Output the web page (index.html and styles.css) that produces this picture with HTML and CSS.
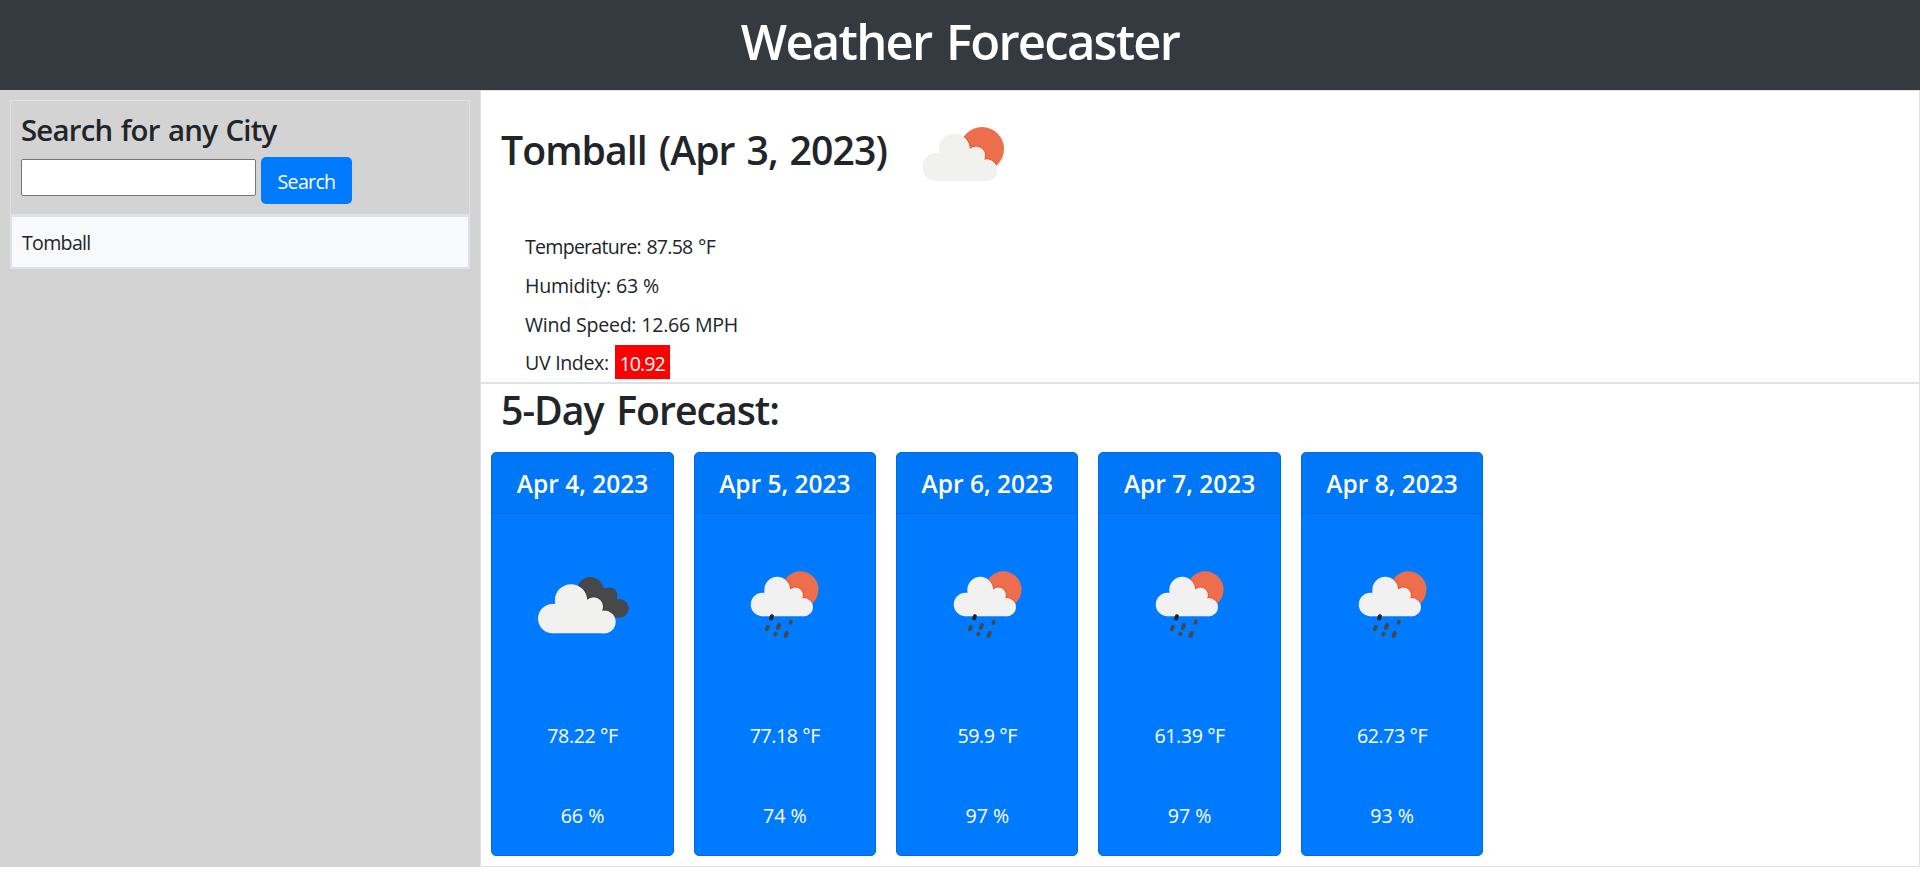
FILE: index.html
```html
<!DOCTYPE html>
<html lang="en">
<head>
<meta charset="utf-8">
<title>Weather Forecaster</title>
<link rel="stylesheet" href="styles.css">
</head>
<body>
<svg class="sprite" aria-hidden="true">
  <defs>
    <g id="cloud">
      <circle cx="14.500" cy="40" r="14.200"/>
      <circle cx="32.200" cy="22.300" r="15.600"/>
      <circle cx="54" cy="28.600" r="9.200"/>
      <circle cx="64.300" cy="43.200" r="11"/>
      <path d="M14.500 54.200V26L48 22L60 34L64.300 54.200Z"/>
    </g>
    <clipPath id="sun-clip"><circle cx="60" cy="22" r="22"/></clipPath>
    <g id="sun-cloud">
      <circle cx="60" cy="22" r="22" fill="#ec6e4c"/>
      <g clip-path="url(#sun-clip)"><use href="#cloud" fill="#e8562f" stroke="#e8562f" stroke-width="2"/></g>
      <use href="#cloud"/>
    </g>
    <g id="drops" stroke="#484849" stroke-width="3.900" stroke-linecap="round">
      <path d="M20.600 47.200l.8-2.300" stroke="#222"/>
      <path d="M16.300 58l1-2.400M27.300 56.600l1.300-3.200M40 51.500l.4-1.200M24.700 63l.3-.6M35 64.600l1.300-3"/>
    </g>
  </defs>
  <symbol id="icon-broken-clouds" viewBox="0 0 125 125">
    <g transform="translate(18 37)" fill="#48484a">
      <circle cx="52.300" cy="13" r="13"/>
      <circle cx="71.300" cy="18.600" r="8.100"/>
      <circle cx="81.300" cy="31.300" r="9.400"/>
      <path d="M50 20L66 10L82 25L80 40.700L60 38Z"/>
    </g>
    <g transform="translate(17.700 37.200) scale(1.035)">
      <use href="#cloud" fill="none" stroke="#333335" stroke-width="1.600" clip-path="url(#dark-side)"/>
      <use href="#cloud" fill="#f1f1f0"/>
    </g>
    <clipPath id="dark-side"><path d="M39 8L60 8L76 34L72 36L58 34Z"/></clipPath>
  </symbol>
  <symbol id="icon-sun-rain" viewBox="0 0 125 125">
    <g transform="translate(28.500 31.300)">
      <g transform="scale(.83)" fill="#f1f1f2"><use href="#sun-cloud"/></g>
      <use href="#drops"/>
    </g>
  </symbol>
</svg>

<header class="header"><h1 class="title">Weather Forecaster</h1></header>

<main class="layout">
  <aside class="sidebar">
    <form class="search">
      <h4 class="search-title">Search for any City</h4>
      <div class="search-row">
        <input class="search-input" type="text" aria-label="City">
        <button class="search-button" type="button">Search</button>
      </div>
    </form>
    <div class="history-item">Tomball</div>
  </aside>

  <section class="content">
    <div class="current">
      <div class="current-head">
        <h2 class="city">Tomball (Apr 3, 2023)</h2>
        <svg class="current-icon" viewBox="0 0 84 56" fill="#f1f1f0"><use href="#sun-cloud"/></svg>
      </div>
      <p class="stat stat-temp">Temperature: 87.58 °F</p>
      <p class="stat">Humidity: 63 %</p>
      <p class="stat">Wind Speed: 12.66 MPH</p>
      <p class="stat stat-uv">UV Index: <span class="uv">10.92</span></p>
    </div>

    <div class="forecast">
      <h2 class="forecast-title">5-Day Forecast:</h2>
      <div class="cards">
        <article class="card">
          <h5 class="card-date">Apr 4, 2023</h5>
          <svg class="card-icon"><use href="#icon-broken-clouds"/></svg>
          <p class="card-temp">78.22 °F</p>
          <p class="card-humidity">66 %</p>
        </article>
        <article class="card">
          <h5 class="card-date">Apr 5, 2023</h5>
          <svg class="card-icon"><use href="#icon-sun-rain"/></svg>
          <p class="card-temp">77.18 °F</p>
          <p class="card-humidity">74 %</p>
        </article>
        <article class="card">
          <h5 class="card-date">Apr 6, 2023</h5>
          <svg class="card-icon"><use href="#icon-sun-rain"/></svg>
          <p class="card-temp">59.9 °F</p>
          <p class="card-humidity">97 %</p>
        </article>
        <article class="card">
          <h5 class="card-date">Apr 7, 2023</h5>
          <svg class="card-icon"><use href="#icon-sun-rain"/></svg>
          <p class="card-temp">61.39 °F</p>
          <p class="card-humidity">97 %</p>
        </article>
        <article class="card">
          <h5 class="card-date">Apr 8, 2023</h5>
          <svg class="card-icon"><use href="#icon-sun-rain"/></svg>
          <p class="card-temp">62.73 °F</p>
          <p class="card-humidity">93 %</p>
        </article>
      </div>
    </div>
  </section>
</main>
</body>
</html>
```
FILE: styles.css
```css
* { box-sizing: border-box; }

body {
  margin: 0;
  background: #fff;
  color: #212529;
  font: 400 19.6px/30px "Open Sans", "Noto Sans", sans-serif;
}

h1, h2, h4, h5, p { margin: 0; }
h1, h2, h4, h5 { font-weight: 600; }

.sprite { position: absolute; width: 0; height: 0; }

.header {
  height: 90px;
  padding-top: 11px;
  background: #343a40;
  text-align: center;
}
.title { color: #fff; font-size: 49px; line-height: 60px; letter-spacing: -1.75px; word-spacing: 3.5px; }

.layout { display: flex; height: 777px; }

/* Sidebar */
.sidebar { width: 480px; padding: 10px; background: #d3d3d3; }
.search { height: 115px; padding: 11px 10px 0; border: 1px solid #dee2e6; }
.search-title { font-size: 29.4px; line-height: 36px; letter-spacing: -.8px; word-spacing: 1.6px; }
.search-row { display: flex; align-items: flex-start; gap: 5px; margin-top: 9px; }
.search-input {
  width: 235px;
  height: 37px;
  margin-top: 2px;
  border: 1px solid #767676;
  border-radius: 2px;
  background: #fff;
}
.search-button {
  width: 91px;
  height: 47px;
  padding: 2px 0 0;
  border: 0;
  border-radius: 5px;
  background: #007bff;
  color: #fff;
  font: inherit;
  letter-spacing: -.7px;
}
.history-item {
  height: 54px;
  padding: 11px 10px;
  border: 2px solid #dee2e6;
  background: #f8f9fa;
  letter-spacing: -.7px;
}

/* Current weather */
.content { flex: 1; border: 1px solid #dee2e6; }
.current { height: 293px; border-bottom: 2px solid #dee2e6; }
.current-head { display: flex; height: 141px; padding: 35px 0 0 20px; }
.city { width: 421px; font-size: 39.2px; line-height: 48px; letter-spacing: -.95px; word-spacing: 2.7px; white-space: nowrap; }
.current-icon { width: 84px; height: 56px; margin-top: 1px; }
.stat { height: 38.75px; padding-left: 44px; letter-spacing: -.28px; word-spacing: .3px; }
.stat-temp { letter-spacing: -.76px; word-spacing: 1.2px; }
.stat-uv { display: flex; gap: 6px; letter-spacing: -.4px; }
.uv {
  width: 55px;
  height: 34px;
  margin-top: -3px;
  background: #f00;
  color: #fff;
  line-height: 38px;
  letter-spacing: -.9px;
  text-align: center;
}

/* Forecast */
.forecast-title { padding: 2px 0 0 20px; font-size: 39.2px; line-height: 48px; letter-spacing: -1px; word-spacing: 3.6px; }
.cards { display: flex; gap: 20px; padding: 18px 10px 0 10.3px; }
.card {
  display: flex;
  flex-direction: column;
  align-items: center;
  width: 182.4px;
  height: 404px;
  border: 1px solid #006be0;
  border-radius: 5px;
  background: #007bff;
  color: #fff;
}
.card-date {
  width: 100%;
  height: 61px;
  padding-top: 16px;
  border-bottom: 1px solid #006be0;
  background: rgba(0, 0, 0, .03);
  font-size: 24.5px;
  text-align: center;
}
.card-icon { width: 125px; height: 125px; margin-top: 26px; }
.card-temp { margin-top: 56px; letter-spacing: -.4px; }
.card-humidity { margin-top: 50px; }
```
